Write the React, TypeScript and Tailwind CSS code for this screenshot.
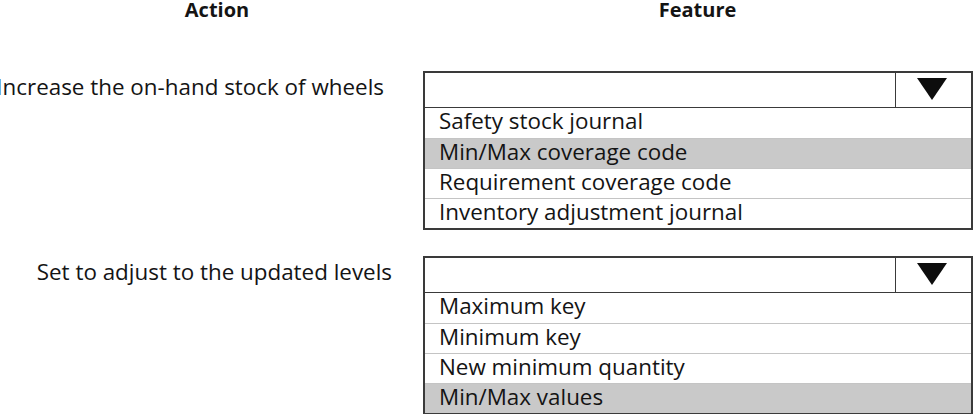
import React from 'react';

type Option = {
  label: string;
  selected?: boolean;
};

type Item = {
  action: string;
  labelPad: string;
  options: Option[];
};

const items: Item[] = [
  {
    action: 'Increase the on-hand stock of wheels',
    labelPad: 'pr-[39px]',
    options: [
      { label: 'Safety stock journal' },
      { label: 'Min/Max coverage code', selected: true },
      { label: 'Requirement coverage code' },
      { label: 'Inventory adjustment journal' },
    ],
  },
  {
    action: 'Set to adjust to the updated levels',
    labelPad: 'pr-[31px]',
    options: [
      { label: 'Maximum key' },
      { label: 'Minimum key' },
      { label: 'New minimum quantity' },
      { label: 'Min/Max values', selected: true },
    ],
  },
];

const Arrow: React.FC = () => (
  <svg width="30" height="22" viewBox="0 0 30 22">
    <polygon points="0,0 30,0 15,22" fill="#0d0d0d" />
  </svg>
);

const Dropdown: React.FC<{ options: Option[] }> = ({ options }) => (
  <div className="w-[550px] border-2 border-[#3a3a3a] bg-white">
    <div className="flex h-[35px] border-b border-[#3a3a3a]">
      <div className="flex-1" />
      <div className="flex w-[76px] items-center justify-center border-l border-[#3a3a3a] pr-[3px] pb-[2px]">
        <Arrow />
      </div>
    </div>
    {options.map((opt, i) => (
      <div
        key={opt.label}
        className={`flex h-[30px] items-center pl-[14px] pb-[3px] text-[22.4px] leading-none ${
          i > 0 ? 'border-t border-[#c4c4c4]' : ''
        } ${opt.selected ? 'bg-[#c9c9c9]' : ''}`}
      >
        {opt.label}
      </div>
    ))}
  </div>
);

const App: React.FC = () => {
  return (
    <div
      className="h-[414px] w-[974px] overflow-hidden bg-white text-[#141414]"
      style={{ fontFamily: '"Open Sans", "Noto Sans", sans-serif' }}
    >
      <div className="flex h-[20px] items-start font-bold text-[20px] leading-[20px]">
        <div className="w-[423px] pl-[11px] text-center">Action</div>
        <div className="w-[549px] text-center">Feature</div>
      </div>

      <div className="mt-[51px] flex flex-col gap-[26px]">
        {items.map((item) => (
          <div key={item.action} className="flex items-start">
            <div
              className={`flex h-[35px] w-[423px] shrink-0 items-center justify-end whitespace-nowrap pb-[3px] text-[22.4px] ${item.labelPad}`}
            >
              {item.action}
            </div>
            <Dropdown options={item.options} />
          </div>
        ))}
      </div>
    </div>
  );
};

export default App;
